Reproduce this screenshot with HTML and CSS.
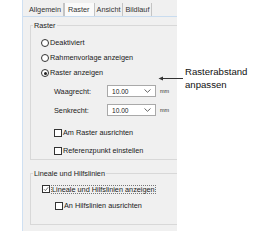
FILE: index.html
```html
<!DOCTYPE html>
<html>
<head>
<meta charset="utf-8">
<link rel="stylesheet" href="styles.css">
</head>
<body>
<div class="stage">
  <div class="dialog">
    <div class="tabs">
      <div class="tab">Allgemein</div>
      <div class="tab active">Raster</div>
      <div class="tab">Ansicht</div>
      <div class="tab last">Bildlauf</div>
    </div>
    <div class="page">
      <fieldset class="group g1">
        <legend>Raster</legend>
        <div class="radio r-first"><span class="dot"></span>Deaktiviert</div>
        <div class="radio"><span class="dot"></span>Rahmenvorlage anzeigen</div>
        <div class="radio"><span class="dot on"></span>Raster anzeigen</div>
        <div class="field f-first">
          <span class="flabel">Waagrecht:</span>
          <span class="combo"><span>10.00</span><svg class="chev" width="7" height="4" viewBox="0 0 7 4"><path d="M0.5 0.5 L3.5 3.3 L6.5 0.5" fill="none" stroke="#555" stroke-width="0.9"/></svg></span>
          <span class="unit">mm</span>
        </div>
        <div class="field">
          <span class="flabel">Senkrecht:</span>
          <span class="combo"><span>10.00</span><svg class="chev" width="7" height="4" viewBox="0 0 7 4"><path d="M0.5 0.5 L3.5 3.3 L6.5 0.5" fill="none" stroke="#555" stroke-width="0.9"/></svg></span>
          <span class="unit">mm</span>
        </div>
        <div class="check c-first"><span class="box"></span>Am Raster ausrichten</div>
        <div class="check"><span class="box"></span>Referenzpunkt einstellen</div>
      </fieldset>
      <fieldset class="group g2">
        <legend>Lineale und Hilfslinien</legend>
        <div class="check c-outer"><span class="box checked"><svg width="8" height="8" viewBox="0 0 8 8"><path d="M1.2 4.2 L3.2 6.2 L7 1.6" fill="none" stroke="#333" stroke-width="0.9"/></svg></span><span class="focus">Lineale und Hilfslinien anzeigen</span></div>
        <div class="check c-inner"><span class="box"></span>An Hilfslinien ausrichten</div>
      </fieldset>
    </div>
  </div>
  <div class="callout">
    <svg class="arrow" width="26" height="7" viewBox="0 0 26 7"><path d="M25 3.5 L2 3.5" stroke="#333" stroke-width="1"/><path d="M0.5 3.5 L5 1.5 L5 5.5 Z" fill="#333"/></svg>
    <div class="ctext">Rasterabstand<br>anpassen</div>
  </div>
</div>
</body>
</html>
```
FILE: styles.css
```css
html, body {
  margin: 0;
  padding: 0;
  background: #ffffff;
}
body {
  width: 267px;
  height: 247px;
  overflow: hidden;
  font-family: "Liberation Sans", Arial, sans-serif;
}
.stage {
  position: relative;
  width: 267px;
  height: 247px;
}
.dialog {
  margin-left: 22px;
  width: 154px;
  height: 231px;
  background: #f0f0f0;
  border-left: 1px solid #cfe0f2;
  overflow: hidden;
  font-size: 7.3px;
  color: #1a1a1a;
}
.tabs {
  display: flex;
  padding: 3px 0 0 4px;
  height: 13px;
  border-bottom: 1px solid #c9dcef;
}
.tab {
  height: 13px;
  line-height: 13px;
  padding: 0 2px;
  border-right: 1px solid #c4c4c4;
  color: #333;
}
.tab.active {
  background: #fafafa;
  border-left: 1px solid #c4c4c4;
  padding: 0 4px 0 3px;
}
.tab.last {
  padding-right: 2px;
}
.page {
  padding: 0 0 0 7px;
}
.group {
  margin: 0;
  border: 1px solid #d8d8d8;
  border-radius: 0;
  width: 180px;
  padding: 0;
}
.group legend {
  padding: 0 1px;
  margin-left: 2px;
  color: #222;
  line-height: 9px;
}
.g1 {
  margin-top: 4px;
  height: 137px;
}
.g2 {
  margin-top: 9px;
  height: 54px;
}
.radio, .check {
  display: flex;
  align-items: center;
  height: 10px;
  line-height: 10px;
  white-space: nowrap;
}
.radio {
  margin-left: 10px;
  margin-top: 5px;
}
.radio.r-first {
  margin-top: 8px;
}
.dot {
  width: 6px;
  height: 6px;
  border: 1px solid #333;
  border-radius: 50%;
  background: #fff;
  margin-right: 1px;
  position: relative;
}
.dot.on::after {
  content: "";
  position: absolute;
  left: 1.5px;
  top: 1.5px;
  width: 3px;
  height: 3px;
  border-radius: 50%;
  background: #222;
}
.field {
  display: flex;
  align-items: center;
  margin-left: 23px;
  height: 12px;
  margin-top: 7px;
}
.field.f-first {
  margin-top: 7px;
}
.flabel {
  width: 53px;
  color: #222;
}
.combo {
  display: flex;
  align-items: center;
  justify-content: space-between;
  box-sizing: border-box;
  width: 49px;
  height: 12px;
  background: #fff;
  border: 1px solid #a9a9a9;
  padding: 0 4px 0 4px;
  font-size: 6.6px;
}
.unit {
  margin-left: 4px;
  font-size: 5.5px;
  color: #333;
}
.check {
  margin-left: 23px;
  margin-top: 8px;
}
.check.c-first {
  margin-top: 12px;
}
.box {
  box-sizing: border-box;
  width: 8px;
  height: 8px;
  border: 1px solid #333;
  background: #fff;
  margin-right: 1px;
  display: flex;
  align-items: center;
  justify-content: center;
}
.box.checked svg {
  display: block;
}
.check.c-outer {
  margin-left: 11px;
  margin-top: 6px;
}
.check.c-inner {
  margin-left: 24px;
  margin-top: 7px;
}
.focus {
  outline: 1px dotted #777;
  outline-offset: -1px;
  padding: 0 1px;
  line-height: 9px;
}
.callout {
  position: absolute;
  left: 158px;
  top: 65px;
  display: flex;
  align-items: flex-start;
}
.arrow {
  margin-top: 10px;
  display: block;
}
.ctext {
  margin-left: 1px;
  font-size: 9.6px;
  line-height: 13px;
  color: #111;
}
```
